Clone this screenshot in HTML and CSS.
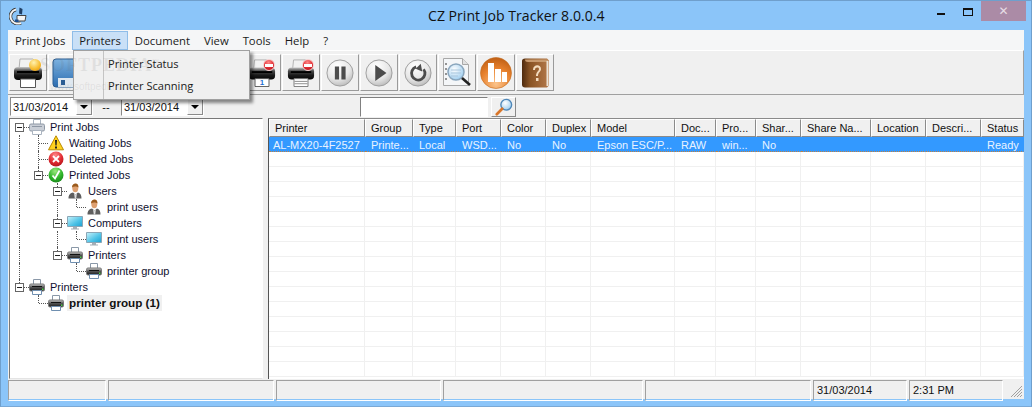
FILE: index.html
```html
<!DOCTYPE html>
<html lang="en">
<head>
<meta charset="utf-8">
<title>CZ Print Job Tracker 8.0.0.4</title>
<link rel="stylesheet" href="styles.css">
</head>
<body>
<svg class="defs" width="0" height="0" aria-hidden="true">
  <defs>
    <linearGradient id="gBody" x1="0" y1="0" x2="0" y2="1"><stop offset="0" stop-color="#c8c8c8"/><stop offset=".3" stop-color="#4a4a4a"/><stop offset=".65" stop-color="#1a1a1a"/><stop offset="1" stop-color="#050505"/></linearGradient>
    <linearGradient id="gSmall" x1="0" y1="0" x2="0" y2="1"><stop offset="0" stop-color="#d0d0d0"/><stop offset=".45" stop-color="#555"/><stop offset="1" stop-color="#1c1c1c"/></linearGradient>
    <radialGradient id="gRed" cx=".45" cy=".25" r=".85"><stop offset="0" stop-color="#f88"/><stop offset=".55" stop-color="#e02a30"/><stop offset="1" stop-color="#a50f18"/></radialGradient>
    <radialGradient id="gGreen" cx=".45" cy=".25" r=".85"><stop offset="0" stop-color="#9be87e"/><stop offset=".55" stop-color="#2fb52a"/><stop offset="1" stop-color="#137a17"/></radialGradient>
    <radialGradient id="gBall" cx=".4" cy=".25" r=".9"><stop offset="0" stop-color="#fff"/><stop offset=".55" stop-color="#e6e6e6"/><stop offset="1" stop-color="#a8a8a8"/></radialGradient>
    <radialGradient id="gOrange" cx=".5" cy=".85" r=".9"><stop offset="0" stop-color="#fbc48c"/><stop offset=".55" stop-color="#e8822e"/><stop offset="1" stop-color="#b95a12"/></radialGradient>
    <linearGradient id="gBook" x1="0" y1="0" x2="1" y2="0"><stop offset="0" stop-color="#4e2a0e"/><stop offset=".3" stop-color="#8a5424"/><stop offset="1" stop-color="#b5794a"/></linearGradient>
    <linearGradient id="gScreen" x1="0" y1="0" x2="1" y2="1"><stop offset="0" stop-color="#c8f2fb"/><stop offset=".6" stop-color="#4cc2e6"/><stop offset="1" stop-color="#1e9fd0"/></linearGradient>
    <linearGradient id="gFloppy" x1="0" y1="0" x2="0" y2="1"><stop offset="0" stop-color="#7db2e0"/><stop offset="1" stop-color="#2b6cb0"/></linearGradient>
    <radialGradient id="gLens" cx=".4" cy=".35" r=".8"><stop offset="0" stop-color="#fff"/><stop offset="1" stop-color="#8cc4ec"/></radialGradient>

    <symbol id="i-printer" viewBox="0 0 30 30">
      <path d="M7 1h13l4 4v6H6z" fill="#f2f2f2" stroke="#b0b0b0"/>
      <rect x="1" y="9" width="28" height="13" rx="4" fill="url(#gBody)"/>
      <rect x="4" y="13" width="22" height="2" fill="#000"/>
      <path d="M7.500 21h15v8.500h-15z" fill="#fff" stroke="#555"/>
    </symbol>
    <symbol id="i-printer-lines" viewBox="0 0 30 30">
      <path d="M7 1h13l4 4v6H6z" fill="#f2f2f2" stroke="#b0b0b0"/>
      <rect x="1" y="9" width="28" height="13" rx="4" fill="url(#gBody)"/>
      <rect x="4" y="13" width="22" height="2" fill="#000"/>
      <path d="M7.500 21h15v8.500h-15z" fill="#fff" stroke="#777"/>
      <path d="M8 24h14M8 26.500h14" stroke="#888"/>
    </symbol>
    <symbol id="i-printer-s" viewBox="0 0 16 16">
      <path d="M4.500.5h7v5h-7z" fill="#fff" stroke="#8a98a8"/>
      <rect x=".5" y="5" width="15" height="7" rx="1.500" fill="url(#gSmall)" stroke="#777"/>
      <rect x="3" y="7" width="10" height="1" fill="#111"/>
      <rect x="13" y="9.500" width="1.500" height="1.500" fill="#4bd04b"/>
      <path d="M3.500 11.500h9v4h-9z" fill="#fff" stroke="#6f8fb0"/>
    </symbol>
    <symbol id="i-printer-pale" viewBox="0 0 16 16">
      <path d="M4.500.5h7v5h-7z" fill="#fff" stroke="#aab4c0"/>
      <rect x=".5" y="5" width="15" height="7" rx="1.500" fill="#c9ced6" stroke="#8f98a5"/>
      <rect x="3" y="7" width="10" height="1" fill="#8f98a5"/>
      <path d="M3.500 11.500h9v4h-9z" fill="#fff" stroke="#aab4c0"/>
    </symbol>
    <symbol id="i-warn" viewBox="0 0 16 16">
      <path d="M8 .8 15.500 14.800H.5z" fill="#ffd21f" stroke="#b98a00"/>
      <path d="M7 5h2l-.4 5.500h-1.200zM7 11.500h2v2H7z" fill="#222"/>
    </symbol>
    <symbol id="i-del" viewBox="0 0 16 16">
      <circle cx="8" cy="8" r="7.500" fill="url(#gRed)"/>
      <path d="m5 5 6 6M11 5l-6 6" stroke="#fff" stroke-width="1.800"/>
    </symbol>
    <symbol id="i-ok" viewBox="0 0 16 16">
      <circle cx="8" cy="8" r="7.500" fill="url(#gGreen)"/>
      <path d="m4.500 8.500 2.500 3L11.500 3.500" fill="none" stroke="#fff" stroke-width="1.800"/>
    </symbol>
    <symbol id="i-user" viewBox="0 0 16 16">
      <path d="M1.500 15.500c0-4 2-5.500 4.500-6l2.500 2 2.500-2c2.500.5 3.500 2.500 3.500 6z" fill="#5e5e5e"/>
      <path d="m7 10 1.500 1.500L10 10l-.8 5.500H7.800z" fill="#ddd"/>
      <ellipse cx="8.300" cy="5" rx="3" ry="4.200" fill="#dea070"/>
      <path d="M5 4.500C5 1.500 7 .5 8.500.5 10.500.5 11.500 2 11.500 4.500 10 3.500 7 3 5 4.500z" fill="#9a5a1c"/>
    </symbol>
    <symbol id="i-screen" viewBox="0 0 16 16">
      <path d="M.5 1.500h15v10H.5z" fill="url(#gScreen)" stroke="#8aa6b6"/>
      <path d="M6 12h4v1.500h2v1H4v-1h2z" fill="#a4aeb6"/>
    </symbol>
    <symbol id="i-pause" viewBox="0 0 30 30">
      <circle cx="15" cy="15" r="14" fill="url(#gBall)" stroke="#9a9a9a"/>
      <path d="M9.500 8h4.500v14H9.500zM16.500 8H21v14h-4.500z" fill="#4c4c4c"/>
    </symbol>
    <symbol id="i-play" viewBox="0 0 30 30">
      <circle cx="15" cy="15" r="14" fill="url(#gBall)" stroke="#9a9a9a"/>
      <path d="M11 6.500 23 15 11 23.500z" fill="#4c4c4c"/>
    </symbol>
    <symbol id="i-reload" viewBox="0 0 30 30">
      <circle cx="15" cy="15" r="14" fill="url(#gBall)" stroke="#9a9a9a"/>
      <path d="M13 8.500A7.200 7.200 0 1 0 21 11" fill="none" stroke="#4c4c4c" stroke-width="3"/>
      <path d="m18 5 1.500 8.500-7-3z" fill="#4c4c4c"/>
    </symbol>
    <symbol id="i-doc" viewBox="0 0 30 30">
      <path d="M1.500.5h19l6 6v21h-25z" fill="#f4f6f8" stroke="#a8a8a8"/>
      <path d="M20.500.5v6h6" fill="#e0e0e0" stroke="#a8a8a8"/>
      <path d="M3 6h2M3 11h2M3 16h2M3 21h2" stroke="#333"/>
      <circle cx="14" cy="14" r="8" fill="url(#gLens)" stroke="#8aa6bd" stroke-width="1.500"/>
      <path d="M9 12h10M9 15h10M9 18h7" stroke="#a9c6dd"/>
      <path d="m20 20 8 7" stroke="#222" stroke-width="2.600"/>
    </symbol>
    <symbol id="i-chart" viewBox="0 0 32 32">
      <circle cx="16" cy="16" r="15.500" fill="url(#gOrange)" stroke="#c56d20" stroke-width=".6"/>
      <path d="M8 6h6v19H8zM15 12h6v13h-6zM22 15h5v10h-5z" fill="#fff"/>
    </symbol>
    <symbol id="i-book" viewBox="0 0 30 30">
      <path d="M2 3Q2 .5 5 .5h22l2 2v25l-2 2H5q-3 0-3-3z" fill="url(#gBook)"/>
      <path d="M5 1.500h22q1 0 1 1V4H8q-3 0-3-2.500z" fill="#c89a6e"/>
      <path d="M27.500 3v25" stroke="#ece4d8" stroke-width="2"/>
      <path d="M13 12c0-6 8-6 8-1 0 3-3 3-3 7h-2c0-4 3-5 3-7 0-2-4-2-4 1zM16 20h2.500v3H16z" fill="#f3dcbe"/>
    </symbol>
    <symbol id="i-floppy" viewBox="0 0 30 30">
      <rect x="1" y="1" width="28" height="28" rx="3" fill="url(#gFloppy)" stroke="#2b5e94"/>
      <rect x="6" y="20" width="18" height="9" fill="#dfe8f0"/>
      <rect x="9" y="22" width="4" height="5" fill="#2b5e94"/>
    </symbol>
    <symbol id="i-search" viewBox="0 0 20 20">
      <circle cx="12.500" cy="7.500" r="6" fill="url(#gLens)" stroke="#4f87b8" stroke-width="1.500"/>
      <path d="M8 12 2 18" stroke="#d9762a" stroke-width="3" stroke-linecap="round"/>
    </symbol>
    <symbol id="i-app" viewBox="0 0 18 18">
      <path d="M7 2.500C2.500 3.500.5 8 2 12c1.500 4 6 5.500 10 4" fill="none" stroke="#333" stroke-width="3.400"/>
      <path d="M7 2.500C2.500 3.500.5 8 2 12c1.500 4 6 5.500 10 4" fill="none" stroke="#f4f4f4" stroke-width="2"/>
      <path d="M10.500.5l3 1.500-.5 5.500-3-1z" fill="#1f3f66"/>
      <path d="M8 8.500h9l-1 5.500H8z" fill="#f4f4f4" stroke="#444"/>
      <path d="M6 12.500h3.500v2.500H6z" fill="#1c4f90"/>
    </symbol>
  </defs>
</svg>

<div class="window">
  <header class="titlebar">
    <svg class="app-icon"><use href="#i-app"/></svg>
    <h1 class="title">CZ Print Job Tracker 8.0.0.4</h1>
    <div class="controls">
      <span class="ctl-min"></span>
      <span class="ctl-max"></span>
      <span class="ctl-close">✕</span>
    </div>
  </header>

  <main class="client">
    <nav class="menubar">
      <span class="menu-item">Print Jobs</span>
      <span class="menu-item is-open">Printers</span>
      <span class="menu-item">Document</span>
      <span class="menu-item">View</span>
      <span class="menu-item">Tools</span>
      <span class="menu-item">Help</span>
      <span class="menu-item">?</span>
      <div class="dropdown">
        <div class="drop-item">Printer Status</div>
        <div class="drop-item">Printer Scanning</div>
      </div>
    </nav>

    <div class="toolbar">
      <div class="tool"><svg class="ic30"><use href="#i-printer"/></svg><span class="badge-gold"></span></div>
      <div class="tool"><svg class="ic30"><use href="#i-floppy"/></svg></div>
      <div class="tool"></div>
      <div class="tool"></div>
      <div class="tool"></div>
      <div class="tool"></div>
      <div class="tool"><svg class="ic28"><use href="#i-printer"/></svg><span class="page-num">1</span><span class="badge-stop"></span></div>
      <div class="tool"><svg class="ic28"><use href="#i-printer-lines"/></svg><span class="badge-stop"></span></div>
      <div class="tool"><svg class="ic28"><use href="#i-pause"/></svg></div>
      <div class="tool"><svg class="ic28"><use href="#i-play"/></svg></div>
      <div class="tool"><svg class="ic28"><use href="#i-reload"/></svg></div>
      <div class="tool"><svg class="ic30"><use href="#i-doc"/></svg></div>
      <div class="tool"><svg class="ic32"><use href="#i-chart"/></svg></div>
      <div class="tool"><svg class="ic30"><use href="#i-book"/></svg></div>
    </div>

    <div class="filterbar">
      <div class="combo"><span class="combo-text">31/03/2014</span><span class="combo-btn"></span></div>
      <span class="dash">--</span>
      <div class="combo"><span class="combo-text">31/03/2014</span><span class="combo-btn"></span></div>
      <div class="search-input"></div>
      <div class="search-btn"><svg class="ic18"><use href="#i-search"/></svg></div>
    </div>

    <div class="panes">
      <div class="tree">
        <div class="row"><span class="g e box"></span><svg class="ic16"><use href="#i-printer-pale"/></svg><span class="lbl">Print Jobs</span></div>
        <div class="row"><span class="g v"></span><span class="g t"></span><svg class="ic16"><use href="#i-warn"/></svg><span class="lbl">Waiting Jobs</span></div>
        <div class="row"><span class="g v"></span><span class="g t"></span><svg class="ic16"><use href="#i-del"/></svg><span class="lbl">Deleted Jobs</span></div>
        <div class="row"><span class="g v"></span><span class="g l box"></span><svg class="ic16"><use href="#i-ok"/></svg><span class="lbl">Printed Jobs</span></div>
        <div class="row"><span class="g v"></span><span class="g"></span><span class="g t box"></span><svg class="ic16"><use href="#i-user"/></svg><span class="lbl">Users</span></div>
        <div class="row"><span class="g v"></span><span class="g"></span><span class="g v"></span><span class="g l"></span><svg class="ic16"><use href="#i-user"/></svg><span class="lbl">print users</span></div>
        <div class="row"><span class="g v"></span><span class="g"></span><span class="g t box"></span><svg class="ic16"><use href="#i-screen"/></svg><span class="lbl">Computers</span></div>
        <div class="row"><span class="g v"></span><span class="g"></span><span class="g v"></span><span class="g l"></span><svg class="ic16"><use href="#i-screen"/></svg><span class="lbl">print users</span></div>
        <div class="row"><span class="g v"></span><span class="g"></span><span class="g l box"></span><svg class="ic16"><use href="#i-printer-s"/></svg><span class="lbl">Printers</span></div>
        <div class="row"><span class="g v"></span><span class="g"></span><span class="g"></span><span class="g l"></span><svg class="ic16"><use href="#i-printer-s"/></svg><span class="lbl">printer group</span></div>
        <div class="row"><span class="g l box"></span><svg class="ic16"><use href="#i-printer-s"/></svg><span class="lbl">Printers</span></div>
        <div class="row"><span class="g"></span><span class="g l"></span><svg class="ic16"><use href="#i-printer-s"/></svg><span class="lbl is-selected">printer group (1)</span></div>
      </div>

      <div class="list">
        <table class="grid">
          <colgroup>
            <col class="c96"><col class="c48"><col class="c43"><col class="c45"><col class="c45"><col class="c45"><col class="c84"><col class="c41"><col class="c40"><col class="c45"><col class="c70"><col class="c55"><col class="c55"><col class="c43">
          </colgroup>
          <thead>
            <tr><th>Printer</th><th>Group</th><th>Type</th><th>Port</th><th>Color</th><th>Duplex</th><th>Model</th><th>Doc...</th><th>Pro...</th><th>Shar...</th><th>Share Na...</th><th>Location</th><th>Descri...</th><th>Status</th></tr>
          </thead>
          <tbody>
            <tr class="sel"><td class="first">AL-MX20-4F2527</td><td>Printe...</td><td>Local</td><td>WSD...</td><td>No</td><td>No</td><td>Epson ESC/P...</td><td>RAW</td><td>win...</td><td>No</td><td></td><td></td><td></td><td>Ready</td></tr>
            <tr><td></td><td></td><td></td><td></td><td></td><td></td><td></td><td></td><td></td><td></td><td></td><td></td><td></td><td></td></tr>
            <tr><td></td><td></td><td></td><td></td><td></td><td></td><td></td><td></td><td></td><td></td><td></td><td></td><td></td><td></td></tr>
            <tr><td></td><td></td><td></td><td></td><td></td><td></td><td></td><td></td><td></td><td></td><td></td><td></td><td></td><td></td></tr>
            <tr><td></td><td></td><td></td><td></td><td></td><td></td><td></td><td></td><td></td><td></td><td></td><td></td><td></td><td></td></tr>
            <tr><td></td><td></td><td></td><td></td><td></td><td></td><td></td><td></td><td></td><td></td><td></td><td></td><td></td><td></td></tr>
            <tr><td></td><td></td><td></td><td></td><td></td><td></td><td></td><td></td><td></td><td></td><td></td><td></td><td></td><td></td></tr>
            <tr><td></td><td></td><td></td><td></td><td></td><td></td><td></td><td></td><td></td><td></td><td></td><td></td><td></td><td></td></tr>
            <tr><td></td><td></td><td></td><td></td><td></td><td></td><td></td><td></td><td></td><td></td><td></td><td></td><td></td><td></td></tr>
            <tr><td></td><td></td><td></td><td></td><td></td><td></td><td></td><td></td><td></td><td></td><td></td><td></td><td></td><td></td></tr>
            <tr><td></td><td></td><td></td><td></td><td></td><td></td><td></td><td></td><td></td><td></td><td></td><td></td><td></td><td></td></tr>
            <tr><td></td><td></td><td></td><td></td><td></td><td></td><td></td><td></td><td></td><td></td><td></td><td></td><td></td><td></td></tr>
            <tr><td></td><td></td><td></td><td></td><td></td><td></td><td></td><td></td><td></td><td></td><td></td><td></td><td></td><td></td></tr>
            <tr><td></td><td></td><td></td><td></td><td></td><td></td><td></td><td></td><td></td><td></td><td></td><td></td><td></td><td></td></tr>
            <tr><td></td><td></td><td></td><td></td><td></td><td></td><td></td><td></td><td></td><td></td><td></td><td></td><td></td><td></td></tr>
            <tr><td></td><td></td><td></td><td></td><td></td><td></td><td></td><td></td><td></td><td></td><td></td><td></td><td></td><td></td></tr>
          </tbody>
        </table>
      </div>
    </div>

    <footer class="statusbar">
      <span class="cell"></span>
      <span class="cell"></span>
      <span class="cell"></span>
      <span class="cell"></span>
      <span class="cell"></span>
      <span class="cell">31/03/2014</span>
      <span class="cell">2:31 PM</span>
      <svg class="grip" width="16" height="16" viewBox="0 0 16 16"><path d="M15 4 4 15M15 7l-8 8M15 10l-5 5M15 13l-2 2" stroke="#a0a0a0"/></svg>
    </footer>

    <div class="watermark"><div class="wm-big">SOFTPEDIA<sup class="wm-tm">™</sup></div><div class="wm-small">www.softpedia.com</div></div>
  </main>
</div>
</body>
</html>
```

FILE: styles.css
```css
* { box-sizing: border-box; }
html, body { margin: 0; padding: 0; }
body {
  width: 1032px;
  height: 407px;
  overflow: hidden;
  font-family: "Liberation Sans", Arial, sans-serif;
  font-size: 11px;
  color: #111;
}
.defs { display: block; height: 0; }
.window {
  width: 1032px;
  height: 407px;
  background: #8bc5f9;
  border: 1px solid #6f9fcc;
  border-bottom-color: #7aa9d6;
  padding: 0 7px 7px;
  display: flex;
  flex-direction: column;
}

/* title bar */
.titlebar {
  height: 29px;
  flex: none;
  display: flex;
  align-items: center;
  position: relative;
}
.app-icon { width: 18px; height: 18px; margin: 1px 0 0 1px; flex: none; }
.title {
  position: absolute;
  left: 420px;
  top: 5px;
  margin: 0;
  font-family: "Open Sans", sans-serif;
  font-weight: 400;
  font-size: 14.100px;
  line-height: 20px;
  color: #111;
}
.controls {
  margin-left: auto;
  margin-right: -2px;
  align-self: flex-start;
  display: flex;
  align-items: flex-start;
}
.ctl-min { width: 8px; height: 2px; background: #111; margin: 12px 18px 0 0; }
.ctl-max { width: 10px; height: 8px; border: 1px solid #111; border-top-width: 2px; margin: 7px 8px 0 0; }
.ctl-close {
  width: 45px;
  height: 20px;
  background: #ab8ba6;
  color: #e6dde5;
  text-align: center;
  font: 12px/20px "DejaVu Sans", sans-serif;
}

/* client */
.client {
  flex: 1;
  min-height: 0;
  background: #f0f0f0;
  display: flex;
  flex-direction: column;
  position: relative;
}

/* menu */
.menubar {
  height: 20px;
  flex: none;
  background: #f5f6f7;
  display: flex;
  padding-top: 1px;
  position: relative;
  z-index: 3;
  font-family: "Open Sans", sans-serif;
  font-size: 11.300px;
  line-height: 19px;
  color: #1a1a1a;
}
.menu-item { padding: 0 7px; white-space: nowrap; }
.is-open { background: #c9e0f7; box-shadow: inset 0 0 0 1px #8fbde8; }
.dropdown {
  position: absolute;
  left: 65px;
  top: 20px;
  width: 177px;
  height: 50px;
  background: #f0f0f0 linear-gradient(#c4c4c4, #c4c4c4) 29px 0 / 1px 100% no-repeat;
  border: 1px solid #a0a0a0;
  box-shadow: 3px 3px 3px rgba(0, 0, 0, .45);
  padding-top: 2px;
}
.drop-item { height: 22px; line-height: 22px; padding-left: 34px; white-space: nowrap; font-size: 11.100px; }

/* toolbar */
.toolbar {
  height: 45px;
  flex: none;
  display: flex;
  gap: 1px;
  padding: 3px 0 0 1px;
  border-top: 1px solid #fff;
  border-bottom: 1px solid #a0a0a0;
  border-right: 1px solid #a0a0a0;
}
.tool {
  width: 38px;
  height: 37px;
  flex: none;
  position: relative;
  display: flex;
  align-items: center;
  justify-content: center;
  border-right: 1px solid #9a9a9a;
  border-bottom: 1px solid #9a9a9a;
  border-top: 1px solid #fff;
  border-left: 1px solid #fff;
}
.ic28 { width: 28px; height: 28px; display: block; }
.ic30 { width: 30px; height: 30px; display: block; }
.ic32 { width: 32px; height: 32px; display: block; }
.ic18 { width: 18px; height: 18px; display: block; }
.ic16 { width: 16px; height: 16px; display: block; flex: none; }
.badge-gold {
  position: absolute;
  right: 5px;
  top: 4px;
  width: 12px;
  height: 12px;
  border-radius: 50%;
  background: radial-gradient(circle at 40% 30%, #fff2b0, #f7b928 60%, #d98a10);
}
.badge-stop {
  position: absolute;
  right: 5px;
  top: 4px;
  width: 12px;
  height: 12px;
  border-radius: 50%;
  background: linear-gradient(#fff, #fff) center / 8px 3px no-repeat, radial-gradient(circle at 45% 25%, #f88, #e02a30 55%, #a50f18);
  border: 1px solid #f6d0d0;
}
.page-num {
  position: absolute;
  left: 10px;
  right: 10px;
  bottom: 3px;
  text-align: center;
  font-size: 8px;
  line-height: 9px;
  font-weight: 700;
  color: #1c6fd0;
}

/* filter bar */
.filterbar {
  height: 23px;
  flex: none;
  display: flex;
  align-items: flex-start;
  padding: 2px 0 0 2px;
}
.combo {
  width: 83px;
  height: 19px;
  background: #fff;
  border: 1px solid;
  border-color: #8a8a8a #fff #fff #8a8a8a;
  display: flex;
  justify-content: space-between;
  line-height: 19px;
}
.combo-text { padding-left: 2px; }
.combo-btn {
  width: 16px;
  background: #f0f0f0;
  border: 1px solid;
  border-color: #fff #8a8a8a #8a8a8a #fff;
  position: relative;
}
.combo-btn::after {
  content: "";
  position: absolute;
  left: 3px;
  top: 6px;
  border: 4px solid transparent;
  border-top: 4px solid #000;
  border-bottom: 0;
}
.dash { width: 28px; padding-right: 2px; text-align: center; line-height: 21px; }
.search-input {
  width: 128px;
  height: 20px;
  margin-left: 156px;
  background: #fff;
  border: 1px solid;
  border-color: #808080 #fff #fff #808080;
}
.search-btn {
  width: 25px;
  height: 20px;
  margin-left: 3px;
  display: flex;
  align-items: center;
  justify-content: center;
  border: 1px solid;
  border-color: #fff #8a8a8a #8a8a8a #fff;
}

/* panes */
.panes {
  flex: 1;
  min-height: 0;
  display: flex;
  gap: 5px;
  padding-left: 1px;
}
.tree {
  width: 254px;
  height: 261px;
  background: #fff;
  border: 1px solid;
  border-color: #777 #fff #e4e4e4 #777;
}
.row { height: 16px; display: flex; align-items: center; color: #101030; }
.lbl { padding: 0 2px; margin-left: 3px; line-height: 16px; white-space: nowrap; }
.is-selected { font-weight: 700; font-size: 11.700px; background: #f0f0f0; color: #111; margin-left: 3px; }

/* tree guide cells */
.g { width: 19px; height: 16px; flex: none; position: relative; }
.g.v::before,
.g.t::before,
.g.l::before {
  content: "";
  position: absolute;
  left: 9px;
  top: 0;
  border-left: 1px dotted #555;
}
.g.v::before, .g.t::before { height: 16px; }
.g.l::before { height: 8px; }
.g.t::after,
.g.l::after,
.g.e::after {
  content: "";
  position: absolute;
  left: 10px;
  top: 8px;
  width: 9px;
  border-top: 1px dotted #555;
}
.g.box {
  background:
    linear-gradient(#222, #222) 7px 8px / 5px 1px no-repeat,
    linear-gradient(#666, #666) 5px 4px / 9px 1px no-repeat,
    linear-gradient(#666, #666) 5px 12px / 9px 1px no-repeat,
    linear-gradient(#666, #666) 5px 4px / 1px 9px no-repeat,
    linear-gradient(#666, #666) 13px 4px / 1px 9px no-repeat;
}
.g.box::before { height: 4px; }
.g.box.t::before { height: 4px; }
.g.box::after { left: 14px; width: 5px; }

/* list */
.list {
  flex: 1;
  height: 261px;
  background: #fff;
  border-left: 1px solid #555;
  border-top: 1px solid #8a8a8a;
  overflow: hidden;
}
.grid {
  table-layout: fixed;
  width: 755px;
  border-collapse: separate;
  border-spacing: 0;
}
.c96 { width: 96px; } .c48 { width: 48px; } .c43 { width: 43px; } .c45 { width: 45px; }
.c84 { width: 84px; } .c41 { width: 41px; } .c40 { width: 40px; } .c70 { width: 70px; } .c55 { width: 55px; }
.grid th {
  height: 18px;
  padding: 0 0 0 5px;
  text-align: left;
  font-weight: 400;
  background: #f0f0f0;
  color: #111;
  white-space: nowrap;
  overflow: hidden;
  border: 1px solid;
  border-color: #fff #8a8a8a #8a8a8a #fff;
}
.grid td {
  height: 15px;
  padding: 2px 0 0 6px;
  line-height: 12px;
  white-space: nowrap;
  overflow: hidden;
  border-right: 1px solid #f0f0f0;
  border-bottom: 1px solid #f0f0f0;
}
.grid .sel td {
  background: #3399ff;
  color: #e9f3ff;
  border-right-color: #3399ff;
  border-bottom: 1px dotted #c08040;
}
.grid .sel td.first { padding-left: 4px; }

/* status bar */
.statusbar {
  height: 21px;
  flex: none;
  display: grid;
  grid-template-columns: 98px 166px 165px 200px 166px 94px 94px;
  column-gap: 2px;
  padding-top: 2px;
  align-items: stretch;
  position: relative;
}
.cell {
  border: 1px solid;
  border-color: #a0a0a0 #fff #fff #a0a0a0;
  line-height: 19px;
  padding-left: 3px;
}
.grip { position: absolute; right: 1px; bottom: 1px; }

/* watermark */
.watermark {
  position: absolute;
  left: 32px;
  top: 22px;
  z-index: 4;
  pointer-events: none;
  color: rgba(110, 110, 110, .12);
}
.wm-big { font: 700 18px/20px "Liberation Serif", serif; letter-spacing: 1px; }
.wm-tm { font-size: 7px; }
.wm-small { font: 10px/12px "Liberation Sans", sans-serif; margin: 6px 0 0 10px; }
```
